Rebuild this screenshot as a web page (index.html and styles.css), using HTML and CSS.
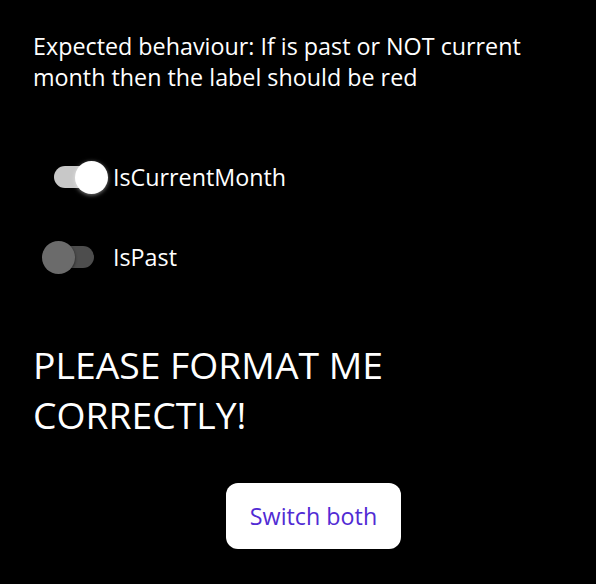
FILE: index.html
```html
<!DOCTYPE html>
<html>
<head>
<meta charset="utf-8">
<link rel="stylesheet" href="styles.css">
</head>
<body>
<main class="page">
  <p class="intro">Expected behaviour: If is past or NOT current month then the label should be red</p>
  <div class="toggles">
    <div class="toggle-row">
      <div class="switch on"><div class="track"></div><div class="thumb"></div></div>
      <span class="toggle-label">IsCurrentMonth</span>
    </div>
    <div class="toggle-row">
      <div class="switch off"><div class="track"></div><div class="thumb"></div></div>
      <span class="toggle-label">IsPast</span>
    </div>
  </div>
  <h1 class="title">PLEASE FORMAT ME CORRECTLY!</h1>
  <div class="actions">
    <button class="btn">Switch both</button>
  </div>
</main>
</body>
</html>
```
FILE: styles.css
```css
html, body {
  margin: 0;
  padding: 0;
  background: #000;
}
body {
  font-family: "Open Sans", "Liberation Sans", sans-serif;
  color: #fff;
  width: 596px;
  height: 584px;
  overflow: hidden;
}
.page {
  display: flex;
  flex-direction: column;
  padding: 31px 33px 0 33px;
}
.intro {
  margin: 0;
  font-size: 23.3px;
  line-height: 31px;
  width: 520px;
}
.toggles {
  display: flex;
  flex-direction: column;
  gap: 32px;
  margin-top: 60px;
}
.toggle-row {
  display: flex;
  align-items: center;
  height: 48px;
}
.switch {
  position: relative;
  width: 40px;
  height: 33px;
  margin-left: 21px;
  display: flex;
  align-items: center;
}
.track {
  width: 40px;
  height: 22px;
  border-radius: 11px;
}
.thumb {
  position: absolute;
  top: 0;
  width: 33px;
  height: 33px;
  border-radius: 50%;
}
.switch.on .track { background: #c8c8c8; }
.switch.on .thumb {
  left: 20.5px;
  background: #fff;
  box-shadow: 0 1px 4px rgba(255, 255, 255, 0.5);
}
.switch.off .track { background: #4d4d4d; }
.switch.off .thumb {
  left: -12.5px;
  background: #6b6b6b;
  box-shadow: 0 1px 3px rgba(0, 0, 0, 0.6);
}
.toggle-label {
  margin-left: 19px;
  font-size: 23.3px;
}
.title {
  margin: 59px 0 0 0;
  font-size: 37.3px;
  font-weight: 400;
  line-height: 50px;
  width: 420px;
}
.actions {
  display: flex;
  margin-top: 43px;
  padding-left: 193px;
}
.btn {
  font-family: "Open Sans", "Liberation Sans", sans-serif;
  font-size: 23.3px;
  color: #512bd4;
  background: #fff;
  border: none;
  border-radius: 12px;
  height: 66px;
  width: 175px;
  padding: 0;
}
```
